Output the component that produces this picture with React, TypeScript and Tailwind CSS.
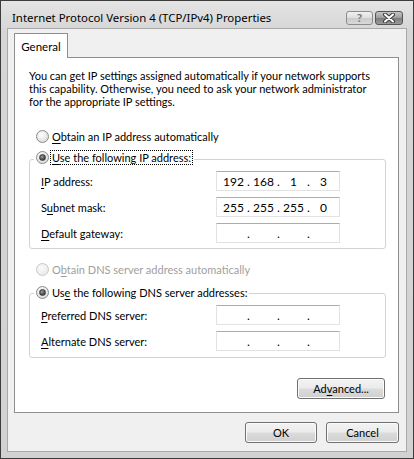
import { Fragment, ReactNode } from "react";

const btn =
    "flex h-[21px] items-center justify-center rounded-[3px] border border-[#707070] bg-[linear-gradient(#f3f3f3_0%,#ebebeb_48%,#dcdcdc_52%,#cfcfcf_100%)] shadow-[inset_0_0_0_1px_#fbfbfb] text-black";

function Radio({ checked = false, disabled = false }: { checked?: boolean; disabled?: boolean }) {
    return (
        <span
            className={`flex h-[13px] w-[13px] shrink-0 items-center justify-center rounded-full border ${
                disabled
                    ? "border-[#c8c8c8] bg-[radial-gradient(circle_at_40%_35%,#fafafa,#e6e6e6)]"
                    : "border-[#8a8a8a] bg-[radial-gradient(circle_at_40%_35%,#ffffff,#d2d2d2)]"
            }`}
        >
            {checked && (
                <span className="h-[7px] w-[7px] rounded-full border border-[#3a3a3a] bg-[radial-gradient(circle_at_40%_35%,#9a9a9a,#1e1e1e)]" />
            )}
        </span>
    );
}

function IpBox({ parts }: { parts: string[] }) {
    return (
        <div className="flex h-[20px] w-[124px] items-center border border-[#e2e2e2] border-t-[#acacac] bg-white pl-[5px] text-[12px]">
            {parts.map((p, i) => (
                <Fragment key={i}>
                    <span className="w-[23px] text-center">{p}</span>
                    {i < 3 && <span className="w-[7px] text-center">.</span>}
                </Fragment>
            ))}
        </div>
    );
}

function Row({ label, parts }: { label: ReactNode; parts: string[] }) {
    return (
        <div className="flex items-center justify-between pr-[45px]">
            <span>{label}</span>
            <IpBox parts={parts} />
        </div>
    );
}

const U = ({ children }: { children: ReactNode }) => <span className="underline underline-offset-[2px]">{children}</span>;

export default function App() {
    const empty = ["", "", "", ""];
    return (
        <div className="flex h-[459px] w-[414px] flex-col border border-[#3c3c3c] bg-[linear-gradient(180deg,#e4e4e4_0%,#d6d6d6_30px,#d2d2d2_100%)] font-['Lato',sans-serif] text-[11px] leading-[13px] text-black">
            {/* Title bar */}
            <div className="flex h-[27px] shrink-0 items-start pl-[11px] pr-[10px]">
                <span className="pt-[9px] font-['Noto_Sans',sans-serif] text-[11.4px] leading-[15px]">
                    Internet Protocol Version 4 (TCP/IPv4) Properties
                </span>
                <div className="ml-auto flex gap-[2px] pt-[10px]">
                    <div className="flex h-[14px] w-[27px] items-center justify-center rounded-[3px] border border-[#8c8c8c] bg-[linear-gradient(#f0f0f0_0%,#dedede_50%,#cacaca_51%,#d8d8d8_100%)]">
                        <span className="text-[12px] font-bold leading-[12px] text-[#7a7a7a]">?</span>
                    </div>
                    <div className="flex h-[14px] w-[28px] items-center justify-center rounded-[3px] border border-[#555555] bg-[linear-gradient(#c4c4c4_0%,#9c9c9c_50%,#7c7c7c_51%,#9a9a9a_100%)]">
                        <svg width="14" height="10" viewBox="0 0 14 10">
                            <path d="M3 1.5L11 8.5M11 1.5L3 8.5" stroke="#3a3a3a" strokeWidth="4" strokeLinecap="round" />
                            <path d="M3 1.5L11 8.5M11 1.5L3 8.5" stroke="#ffffff" strokeWidth="2" strokeLinecap="round" />
                        </svg>
                    </div>
                </div>
            </div>

            {/* Client area */}
            <div className="mx-[6px] mb-[6px] flex flex-1 flex-col border border-[#a9a9a9] bg-[#f0f0f0] pb-[8px] pl-[6px] pr-[7px] pt-[4px]">
                {/* Tab */}
                <div className="relative z-10 -mb-px flex h-[25px] w-[54px] items-start justify-center border border-b-0 border-[#8e8e8e] bg-white pt-[5px]">
                    <span className="text-[11.5px] leading-[15px]">General</span>
                </div>

                {/* Panel */}
                <div className="flex flex-1 flex-col border border-[#8e8e8e] bg-white pb-[13px] pl-[14px] pr-[12px] pt-[11px]">
                    <p className="whitespace-nowrap">
                        You can get IP settings assigned automatically if your network supports
                        <br />
                        this capability. Otherwise, you need to ask your network administrator
                        <br />
                        for the appropriate IP settings.
                    </p>

                    <div className="ml-[7px] mt-[20px] flex h-[16px] items-center gap-[3px]">
                        <Radio />
                        <span>
                            <U>O</U>btain an IP address automatically
                        </span>
                    </div>

                    {/* IP group */}
                    <div className="mt-[5px]">
                        <div className="relative z-10 ml-[5px] flex h-[16px] w-fit items-center gap-[2px] bg-white px-[2px]">
                            <Radio checked />
                            <span className="px-[1px] outline-1 outline-dotted outline-black">
                                <U>U</U>se the following IP address:
                            </span>
                        </div>
                        <div className="-mt-[6px] flex flex-col gap-[6px] rounded-[3px] border border-[#d3d3d3] pb-[5px] pl-[11px] pt-[11px]">
                            <Row label={<><U>I</U>P address:</>} parts={["192", "168", "1", "3"]} />
                            <Row label={<>S<U>u</U>bnet mask:</>} parts={["255", "255", "255", "0"]} />
                            <Row label={<><U>D</U>efault gateway:</>} parts={empty} />
                        </div>
                    </div>

                    <div className="ml-[7px] mt-[12px] flex h-[16px] items-center gap-[3px] text-[#a0a0a0]">
                        <Radio disabled />
                        <span>
                            O<U>b</U>tain DNS server address automatically
                        </span>
                    </div>

                    {/* DNS group */}
                    <div className="mt-[7px]">
                        <div className="relative z-10 ml-[5px] flex h-[16px] w-fit items-center gap-[3px] bg-white px-[2px]">
                            <Radio checked />
                            <span>
                                Us<U>e</U> the following DNS server addresses:
                            </span>
                        </div>
                        <div className="-mt-[7px] flex flex-col gap-[6px] rounded-[3px] border border-[#d3d3d3] pb-[6px] pl-[11px] pt-[11px]">
                            <Row label={<><U>P</U>referred DNS server:</>} parts={empty} />
                            <Row label={<><U>A</U>lternate DNS server:</>} parts={empty} />
                        </div>
                    </div>

                    <div className="mt-auto flex justify-end pr-[1px]">
                        <button className={`${btn} w-[88px]`}>
                            Ad<U>v</U>anced...
                        </button>
                    </div>
                </div>

                {/* Dialog buttons */}
                <div className="mt-[9px] flex justify-end gap-[9px]">
                    <button className={`${btn} w-[72px]`}>OK</button>
                    <button className={`${btn} w-[73px]`}>Cancel</button>
                </div>
            </div>
        </div>
    );
}
